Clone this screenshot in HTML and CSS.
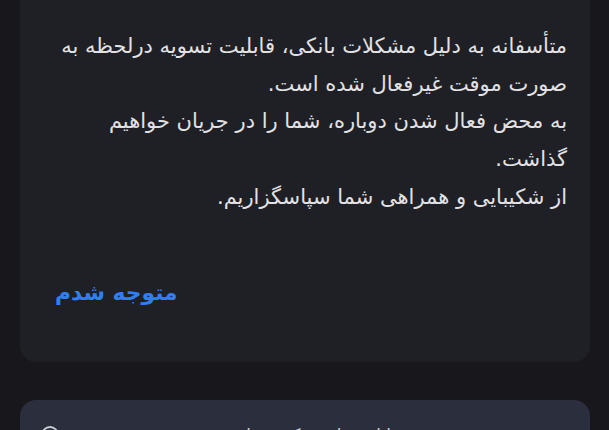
FILE: index.html
```html
<!DOCTYPE html>
<html lang="fa" dir="rtl">
<head>
<meta charset="utf-8">
<link rel="stylesheet" href="styles.css">
</head>
<body>
<div class="page">
  <section class="card">
    <p class="msg">
      <span class="line">متأسفانه به دلیل مشکلات بانکی، قابلیت تسویه درلحظه به</span>
      <span class="line">صورت موقت غیرفعال شده است.</span>
      <span class="line">به محض فعال شدن دوباره، شما را در جریان خواهیم</span>
      <span class="line">گذاشت.</span>
      <span class="line">از شکیبایی و همراهی شما سپاسگزاریم.</span>
    </p>
    <div class="actions">
      <button class="ok">متوجه شدم</button>
    </div>
  </section>
  <div class="gap"></div>
  <section class="card2">
    <div class="row">
      <span class="rowtext">موجودی قابل برداشت کیف پول</span>
      <svg class="info" width="20" height="20" viewBox="0 0 20 20"><circle cx="10" cy="10" r="8" fill="none" stroke="#c9ccd4" stroke-width="1.8"/></svg>
    </div>
  </section>
</div>
</body>
</html>
```
FILE: styles.css
```css
html, body {
  margin: 0;
  padding: 0;
  background: #18181c;
  height: 100%;
  overflow: hidden;
}
.page {
  padding: 0 19px 0 20px;
  font-family: "DejaVu Sans", sans-serif;
}
.card {
  background: #1f2026;
  border-radius: 0 0 16px 16px;
  padding: 28px 23px 0 30px;
  height: 334px;
  box-sizing: content-box;
}
.msg {
  margin: 0;
  color: #e2e2e4;
  font-size: 21px;
  line-height: 37.7px;
}
.line {
  display: block;
  white-space: nowrap;
}
.actions {
  display: flex;
  justify-content: flex-end;
  margin-top: 63px;
  padding-left: 5px;
}
.ok {
  background: none;
  border: 0;
  padding: 0;
  font-family: "DejaVu Sans", sans-serif;
  font-weight: bold;
  font-size: 21.8px;
  color: #2f7ef3;
}
.gap {
  height: 38px;
}
.card2 {
  background: #2b2f3d;
  border-radius: 16px 16px 0 0;
  height: 60px;
  padding: 25px 22px 0 20px;
}
.row {
  display: flex;
  align-items: center;
  justify-content: space-between;
}
.rowtext {
  color: #c9ccd4;
  font-size: 17px;
  margin-right: 105px;
}
```
